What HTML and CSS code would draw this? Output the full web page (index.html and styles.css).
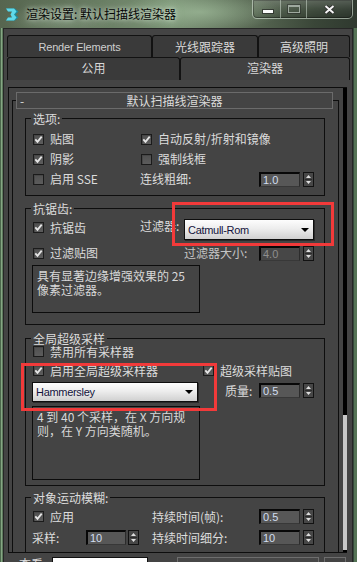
FILE: index.html
```html
<!DOCTYPE html>
<html lang="zh-CN">
<head>
<meta charset="utf-8">
<title>渲染设置</title>
<link rel="stylesheet" href="styles.css">
</head>
<body>
<div class="win">
  <div class="titlebar">
    <svg class="appicon" width="16" height="15" viewBox="0 0 16 15">
      <path d="M1 1.5 H10 L13.5 4.5 L10.5 7.5 L13.5 10.5 L10 13.5 H1 L3.5 10.5 H8 L6.5 7.5 L8 4.5 H3.5 Z" fill="#1d8c9e"/>
      <path d="M1 1.5 H9 L11.5 4.5 L9 7.5 L11.5 10.5 L9 13.5 H1 L3 10.5 H7 L5.5 7.5 L7 4.5 H3 Z" fill="#5fd9ea"/>
    </svg>
    <span class="title">渲染设置: 默认扫描线渲染器</span>
    <div class="cbtns">
      <div class="cbtn cmin"><span class="g-min"></span></div>
      <div class="cbtn cmax"><span class="g-max"></span></div>
      <div class="cbtn cclose"><svg width="11" height="9" viewBox="0 0 11 9"><path d="M1.5 1 L9.5 8 M9.5 1 L1.5 8" stroke="#2a2a2a" stroke-width="3.6"/><path d="M1.5 1 L9.5 8 M9.5 1 L1.5 8" stroke="#f4f4f4" stroke-width="2"/></svg></div>
    </div>
  </div>
  <div class="client">
    <div class="tabs">
      <div class="tabrow">
        <div class="tab t-re latin">Render Elements</div>
        <div class="tab t-rt">光线跟踪器</div>
        <div class="tab t-ai">高级照明</div>
      </div>
      <div class="tabrow r2">
        <div class="tab t-com">公用</div>
        <div class="tab t-ren sel">渲染器</div>
      </div>
    </div>
    <div class="page">
      <div class="scroll">
        <div class="roll-area">
          <div class="rollout">
            <div class="rhead"><span class="rminus">-</span><span class="rtitle">默认扫描线渲染器</span><span></span></div>

            <div class="grp g1">
              <div class="lg">选项:</div>
              <div class="row">
                <label class="chk c108"><span class="box"><svg width="9" height="9" viewBox="0 0 9 9"><path d="M1.3 4.3 L3.5 6.8 L7.7 1.6" fill="none" stroke="#e6e6e6" stroke-width="1.8"/></svg></span>贴图</label>
                <label class="chk"><span class="box"><svg width="9" height="9" viewBox="0 0 9 9"><path d="M1.3 4.3 L3.5 6.8 L7.7 1.6" fill="none" stroke="#e6e6e6" stroke-width="1.8"/></svg></span>自动反射/折射和镜像</label>
              </div>
              <div class="row">
                <label class="chk c108"><span class="box"><svg width="9" height="9" viewBox="0 0 9 9"><path d="M1.3 4.3 L3.5 6.8 L7.7 1.6" fill="none" stroke="#e6e6e6" stroke-width="1.8"/></svg></span>阴影</label>
                <label class="chk"><span class="box"></span>强制线框</label>
              </div>
              <div class="row">
                <label class="chk c108"><span class="box"></span>启用 SSE</label>
                <span class="lbl w119">连线粗细:</span>
                <div class="spin"><div class="sp-in">1.0</div><svg class="sp-btn" width="11" height="15" viewBox="0 0 11 15"><rect x="0.5" y="0.5" width="10" height="14" fill="#474747" stroke="#121212"/><path d="M2 7.5 H9" stroke="#2b2b2b"/><path d="M3 6 L5.5 3 L8 6 Z M3 9 L8 9 L5.5 12 Z" fill="#dedede"/></svg></div>
              </div>
            </div>

            <div class="grp g2">
              <div class="lg">抗锯齿:</div>
              <div class="row r21">
                <label class="chk c108 top"><span class="box"><svg width="9" height="9" viewBox="0 0 9 9"><path d="M1.3 4.3 L3.5 6.8 L7.7 1.6" fill="none" stroke="#e6e6e6" stroke-width="1.8"/></svg></span>抗锯齿</label>
                <span class="lbl w44 top">过滤器:</span>
                <div class="dd w130"><span>Catmull-Rom</span><svg class="arr" width="8" height="4" viewBox="0 0 8 4"><path d="M0 0 H8 L4 4 Z" fill="#000"/></svg></div>
              </div>
              <div class="row r20b">
                <label class="chk c152"><span class="box"><svg width="9" height="9" viewBox="0 0 9 9"><path d="M1.3 4.3 L3.5 6.8 L7.7 1.6" fill="none" stroke="#e6e6e6" stroke-width="1.8"/></svg></span>过滤贴图</label>
                <span class="lbl w75 dim">过滤器大小:</span>
                <div class="spin"><div class="sp-in off">4.0</div><svg class="sp-btn" width="11" height="15" viewBox="0 0 11 15"><rect x="0.5" y="0.5" width="10" height="14" fill="#474747" stroke="#121212"/><path d="M2 7.5 H9" stroke="#2b2b2b"/><path d="M3 6 L5.5 3 L8 6 Z M3 9 L8 9 L5.5 12 Z" fill="#dedede"/></svg></div>
              </div>
              <div class="desc d1">具有显著边缘增强效果的 25<br>像素过滤器。</div>
            </div>

            <div class="grp g3">
              <div class="lg">全局超级采样</div>
              <div class="g3cols">
                <div class="g3l">
                  <div class="row r19"><label class="chk"><span class="box"></span>禁用所有采样器</label></div>
                  <div class="row r19"><label class="chk"><span class="box"><svg width="9" height="9" viewBox="0 0 9 9"><path d="M1.3 4.3 L3.5 6.8 L7.7 1.6" fill="none" stroke="#e6e6e6" stroke-width="1.8"/></svg></span>启用全局超级采样器</label></div>
                  <div class="dd dd2"><span>Hammersley</span><svg class="arr" width="8" height="4" viewBox="0 0 8 4"><path d="M0 0 H8 L4 4 Z" fill="#000"/></svg></div>
                  <div class="desc d2">4 到 40 个采样，在 X 方向规<br>则，在 Y 方向类随机。</div>
                </div>
                <div class="g3r">
                  <div class="row r19"></div>
                  <div class="row r19"><label class="chk np"><span class="box"><svg width="9" height="9" viewBox="0 0 9 9"><path d="M1.3 4.3 L3.5 6.8 L7.7 1.6" fill="none" stroke="#e6e6e6" stroke-width="1.8"/></svg></span>超级采样贴图</label></div>
                  <div class="row r19 qrow">
                    <span class="lbl w34">质量:</span>
                    <div class="spin"><div class="sp-in">0.5</div><svg class="sp-btn" width="11" height="15" viewBox="0 0 11 15"><rect x="0.5" y="0.5" width="10" height="14" fill="#474747" stroke="#121212"/><path d="M2 7.5 H9" stroke="#2b2b2b"/><path d="M3 6 L5.5 3 L8 6 Z M3 9 L8 9 L5.5 12 Z" fill="#dedede"/></svg></div>
                  </div>
                </div>
              </div>
            </div>

            <div class="grp g4">
              <div class="lg">对象运动模糊:</div>
              <div class="row r21">
                <label class="chk c120"><span class="box"><svg width="9" height="9" viewBox="0 0 9 9"><path d="M1.3 4.3 L3.5 6.8 L7.7 1.6" fill="none" stroke="#e6e6e6" stroke-width="1.8"/></svg></span>应用</label>
                <span class="lbl w107">持续时间(帧):</span>
                <div class="spin"><div class="sp-in">0.5</div><svg class="sp-btn" width="11" height="15" viewBox="0 0 11 15"><rect x="0.5" y="0.5" width="10" height="14" fill="#474747" stroke="#121212"/><path d="M2 7.5 H9" stroke="#2b2b2b"/><path d="M3 6 L5.5 3 L8 6 Z M3 9 L8 9 L5.5 12 Z" fill="#dedede"/></svg></div>
              </div>
              <div class="row r21">
                <div class="cell c120">
                  <span class="lbl w54">采样:</span>
                  <div class="spin sm"><div class="sp-in">10</div><svg class="sp-btn" width="11" height="15" viewBox="0 0 11 15"><rect x="0.5" y="0.5" width="10" height="14" fill="#474747" stroke="#121212"/><path d="M2 7.5 H9" stroke="#2b2b2b"/><path d="M3 6 L5.5 3 L8 6 Z M3 9 L8 9 L5.5 12 Z" fill="#dedede"/></svg></div>
                </div>
                <span class="lbl w107">持续时间细分:</span>
                <div class="spin"><div class="sp-in">10</div><svg class="sp-btn" width="11" height="15" viewBox="0 0 11 15"><rect x="0.5" y="0.5" width="10" height="14" fill="#474747" stroke="#121212"/><path d="M2 7.5 H9" stroke="#2b2b2b"/><path d="M3 6 L5.5 3 L8 6 Z M3 9 L8 9 L5.5 12 Z" fill="#dedede"/></svg></div>
              </div>
            </div>
          </div>
        </div>
        <div class="sbar"><div class="thumb"></div></div>
      </div>
      <div class="bottom">
        <span class="blbl">查看:</span>
        <div class="bcombo"></div>
        <div class="bbtn"></div>
        <div class="bsmall"></div>
      </div>
    </div>
  </div>
  <div class="mark m1"></div>
  <div class="mark m2"></div>
</div>
</body>
</html>
```

FILE: styles.css
```css
* { box-sizing: border-box; margin: 0; padding: 0; }
html, body { width: 357px; height: 562px; overflow: hidden; }
body {
  font-family: "Noto Sans CJK SC", "Liberation Sans", sans-serif;
  font-size: 12px;
  color: #dcdcdc;
  background: #4e6c4e;
}
.win {
  position: relative;
  width: 357px;
  height: 562px;
  overflow: hidden;
  display: flex;
  flex-direction: column;
  background: linear-gradient(90deg, #4b684b 0 1px, #86a684 1px 2px, #5d7a5d 2px 3px, #444 3px 353px, #34483a 353px 354px, #557355 354px 357px);
}

/* title bar */
.titlebar {
  height: 28px;
  flex: none;
  display: flex;
  align-items: center;
  background:
    radial-gradient(ellipse 110px 26px at 200px 12px, rgba(175, 205, 170, .55), rgba(175, 205, 170, 0) 75%),
    radial-gradient(ellipse 70px 22px at 60px 20px, rgba(150, 172, 148, .45), rgba(150, 172, 148, 0) 80%),
    linear-gradient(90deg, #56654f 0%, #65775f 22%, #7a9275 48%, #5a6a55 70%, #3a4638 88%, #2f392f 100%);
}
.appicon { margin-left: 5px; flex: none; }
.title {
  margin-left: 5px;
  color: #060606;
  line-height: 16px;
  white-space: nowrap;
  text-shadow: 0 0 4px rgba(225, 240, 225, .85), 0 0 9px rgba(225, 240, 225, .55);
}
.cbtns {
  margin-left: auto;
  margin-right: 4px;
  align-self: flex-start;
  display: flex;
  border: 1px solid rgba(215, 228, 215, .6);
  border-top: 0;
  border-radius: 0 0 5px 5px;
  overflow: hidden;
  box-shadow: inset 0 0 0 1px rgba(0, 0, 0, .35);
}
.cbtn {
  height: 18px;
  display: flex;
  align-items: center;
  justify-content: center;
  background: linear-gradient(rgba(255, 255, 255, .18), rgba(255, 255, 255, .04) 50%, rgba(0, 0, 0, .12));
}
.cbtn + .cbtn { border-left: 1px solid rgba(215, 228, 215, .5); }
.cmin { width: 27px; align-items: flex-end; padding: 0 0 5px 3px; }
.cmax { width: 26px; }
.cclose { width: 46px; }
.g-min { width: 10px; height: 3px; background: #fafafa; box-shadow: 0 0 0 1px rgba(30, 30, 30, .6); }
.g-max { width: 12px; height: 8px; border: 1px solid #9ea89e; border-top-width: 2px; box-shadow: 0 0 0 1px rgba(30, 30, 30, .4); }

/* client */
.client {
  flex: 1;
  min-height: 0;
  margin-left: 3px;
  width: 350px;
  border: 1px solid #262626;
  border-bottom: 0;
  background: #444;
  display: flex;
  flex-direction: column;
}
.tabs { margin: 6px 2px 0 3px; flex: none; }
.tabrow { display: flex; height: 22px; }
.tabrow.r2 { height: 23px; }
.tab {
  border: 1px solid #121212;
  border-bottom: 0;
  border-radius: 3px 3px 0 0;
  background: #3a3a3a;
  display: flex;
  align-items: center;
  justify-content: center;
  color: #d8d8d8;
  line-height: 14px;
  white-space: nowrap;
}
.r2 .tab { padding-bottom: 3px; }
.tab.sel { background: #414141; }
.latin { font-family: "Liberation Sans", sans-serif; font-size: 11px; letter-spacing: -0.2px; color: #cfcfcf; }
.t-re { width: 145px; }
.t-rt { width: 106px; }
.t-ai { width: 92px; }
.t-com { width: 173px; }
.t-ren { width: 170px; }

.page {
  flex: 1;
  min-height: 0;
  display: flex;
  flex-direction: column;
  padding: 7px 5px 0 4px;
}
.scroll {
  height: 466px;
  flex: none;
  display: flex;
  border: 1px solid #0d0d0d;
  border-right: 0;
}
.roll-area { flex: 1; min-width: 0; overflow: hidden; }
.sbar { width: 4px; flex: none; background: #000; display: flex; flex-direction: column; }
.thumb { margin-top: auto; height: 135px; margin-bottom: 2px; background: #c8c8c8; }

/* rollout */
.rollout {
  margin: 12px 4px 0 3px;
  border: 1px solid #0e0e0e;
  border-bottom: 0;
  padding-bottom: 40px;
}
.rhead {
  margin: -9px 5px 0 3px;
  height: 17px;
  border: 1px solid #6b6b6b;
  background: #444;
  display: grid;
  grid-template-columns: 1fr auto 1fr;
  align-items: center;
  line-height: 14px;
}
.rminus { padding-left: 3px; }

/* groups */
.grp { border: 1px solid #0e0e0e; margin: 12px 13px 0 12px; padding: 0 0 6px 6px; }
.g1 { margin-top: 9px; }
.g2 { margin-top: 12px; padding-bottom: 11px; }
.g3 { margin-top: 13px; padding-bottom: 5px; }
.g4 { margin-top: 11px; padding-bottom: 30px; }
.lg {
  height: 13px;
  line-height: 13px;
  margin: -7px 0 4px -1px;
  padding: 0 2px;
  background: #444;
  width: max-content;
}
.g3 .lg { margin-bottom: -3px; }
.g4 .lg { margin-bottom: 2px; }

.row { display: flex; align-items: center; height: 20px; }
.r21 { height: 21px; }
.r19 { height: 19px; }
.r20b { margin-top: 3px; }
.chk { display: flex; align-items: center; gap: 6px; padding-left: 1px; line-height: 14px; white-space: nowrap; }
.chk.np { padding-left: 0; }
.top { align-self: flex-start; height: 17px; }
.lbl { line-height: 14px; white-space: nowrap; flex: none; }
.dim { color: #c4c4c4; }
.c108 { width: 108px; flex: none; }
.c120 { width: 120px; flex: none; }
.c152 { width: 152px; flex: none; }
.cell { display: flex; align-items: center; }
.w119 { width: 119px; }
.w44 { width: 44px; }
.w75 { width: 75px; }
.w34 { width: 34px; }
.w54 { width: 54px; }
.w107 { width: 107px; }

.box {
  width: 11px;
  height: 11px;
  flex: none;
  border: 1px solid #1b1b1b;
  background: linear-gradient(#505050, #5c5c5c);
  box-shadow: inset 1px 1px 0 #474747;
  display: flex;
  align-items: center;
  justify-content: center;
}

/* spinner */
.spin { display: flex; align-items: center; gap: 3px; flex: none; }
.spin.sm { gap: 2px; }
.sp-in {
  width: 41px;
  height: 15px;
  border-style: solid;
  border-width: 2px 1px 1px 2px;
  border-color: #080808 #2c2c2c #383838 #080808;
  background: #575757;
  font-family: "Liberation Sans", sans-serif;
  font-size: 11px;
  line-height: 12px;
  padding-left: 2px;
  color: #d2def0;
}
.sm .sp-in { width: 40px; }
.sp-in.off { background: #474747; color: #8e8e8e; }
.sp-btn { display: block; flex: none; }

/* dropdown */
.dd {
  height: 21px;
  border: 1px solid #0e0e0e;
  background: linear-gradient(#fdfdfd, #ededed 45%, #d0d0d0);
  box-shadow: 1px 1px 0 #2a2a2a;
  display: flex;
  align-items: center;
  padding: 0 4px 0 3px;
  font-family: "Liberation Sans", sans-serif;
  font-size: 11px;
  letter-spacing: -0.3px;
  color: #14143c;
}
.dd .arr { margin-left: auto; display: block; }
.w130 { width: 130px; }
.dd2 { width: 166px; height: 20px; margin-top: 2px; }

.desc {
  width: 168px;
  border: 1px solid #0c0c0c;
  padding: 3px 0 0 4px;
  line-height: 14px;
  color: #d8d8d8;
}
.d1 { height: 48px; margin-top: 2px; }
.d2 { height: 74px; margin-top: 4px; }

.g3cols { display: flex; }
.g3l { width: 168px; flex: none; }
.g3r { margin-left: 3px; }
.qrow { margin-top: 1px; padding-left: 22px; }

/* bottom */
.bottom { display: flex; align-items: flex-start; padding-top: 4px; }
.blbl { margin-left: 11px; width: 33px; line-height: 14px; }
.bcombo { width: 96px; height: 20px; background: #fff; border: 1px solid #111; }
.bbtn { margin-left: 29px; width: 142px; height: 22px; border: 1px solid #6e6e6e; background: #474747; }
.bsmall { margin-left: 5px; width: 22px; height: 22px; border: 1px solid #6e6e6e; }

/* red annotation frames */
.mark { position: absolute; border: 3px solid #f23a3a; pointer-events: none; }
.m1 { left: 172px; top: 202px; width: 162px; height: 44px; }
.m2 { left: 21px; top: 363px; width: 196px; height: 48px; }
```
